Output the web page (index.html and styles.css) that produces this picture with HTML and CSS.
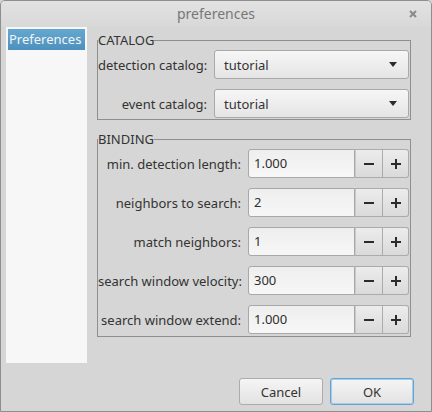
FILE: index.html
```html
<!DOCTYPE html>
<html>
<head>
<meta charset="utf-8">
<link rel="stylesheet" href="styles.css">
</head>
<body>
<div class="window">
  <div class="titlebar">
    <span class="title">preferences</span>
    <svg class="close" width="8" height="8" viewBox="0 0 8 8"><path d="M1 1 L7 7 M7 1 L1 7" stroke="#8a8a8a" stroke-width="2"/></svg>
  </div>
  <div class="content">
    <div class="sidebar">
      <div class="item selected">Preferences</div>
    </div>
    <div class="main">
      <fieldset class="group">
        <legend>CATALOG</legend>
        <div class="form catalog">
          <label>detection catalog:</label>
          <div class="combo"><span>tutorial</span><span class="arrow"></span></div>
          <label>event catalog:</label>
          <div class="combo"><span>tutorial</span><span class="arrow"></span></div>
        </div>
      </fieldset>
      <fieldset class="group binding">
        <legend>BINDING</legend>
        <div class="form bind">
          <label>min. detection length:</label>
          <div class="spin"><div class="field">1.000</div><div class="sbtn minus"><svg width="12" height="12" viewBox="0 0 12 12"><path d="M1 6H11" stroke="#2b2b2b" stroke-width="2"/></svg></div><div class="sbtn plus"><svg width="12" height="12" viewBox="0 0 12 12"><path d="M1 6H11M6 1V11" stroke="#2b2b2b" stroke-width="2"/></svg></div></div>
          <label>neighbors to search:</label>
          <div class="spin"><div class="field">2</div><div class="sbtn minus"><svg width="12" height="12" viewBox="0 0 12 12"><path d="M1 6H11" stroke="#2b2b2b" stroke-width="2"/></svg></div><div class="sbtn plus"><svg width="12" height="12" viewBox="0 0 12 12"><path d="M1 6H11M6 1V11" stroke="#2b2b2b" stroke-width="2"/></svg></div></div>
          <label>match neighbors:</label>
          <div class="spin"><div class="field">1</div><div class="sbtn minus"><svg width="12" height="12" viewBox="0 0 12 12"><path d="M1 6H11" stroke="#2b2b2b" stroke-width="2"/></svg></div><div class="sbtn plus"><svg width="12" height="12" viewBox="0 0 12 12"><path d="M1 6H11M6 1V11" stroke="#2b2b2b" stroke-width="2"/></svg></div></div>
          <label>search window velocity:</label>
          <div class="spin"><div class="field">300</div><div class="sbtn minus"><svg width="12" height="12" viewBox="0 0 12 12"><path d="M1 6H11" stroke="#2b2b2b" stroke-width="2"/></svg></div><div class="sbtn plus"><svg width="12" height="12" viewBox="0 0 12 12"><path d="M1 6H11M6 1V11" stroke="#2b2b2b" stroke-width="2"/></svg></div></div>
          <label>search window extend:</label>
          <div class="spin"><div class="field">1.000</div><div class="sbtn minus"><svg width="12" height="12" viewBox="0 0 12 12"><path d="M1 6H11" stroke="#2b2b2b" stroke-width="2"/></svg></div><div class="sbtn plus"><svg width="12" height="12" viewBox="0 0 12 12"><path d="M1 6H11M6 1V11" stroke="#2b2b2b" stroke-width="2"/></svg></div></div>
        </div>
      </fieldset>
    </div>
  </div>
  <div class="buttons">
    <button class="btn">Cancel</button>
    <button class="btn ok">OK</button>
  </div>
</div>
</body>
</html>
```
FILE: styles.css
```css
* { box-sizing: border-box; }
html, body { margin: 0; padding: 0; background: #d6d6d6; }
body {
  font-family: "Noto Sans", "DejaVu Sans", sans-serif;
  font-size: 13px;
  color: #333333;
}
.window {
  width: 432px;
  height: 412px;
  border: 1px solid #8e8e8e;
  border-radius: 5px 5px 0 0;
  background: #d6d6d6;
  overflow: hidden;
}
.titlebar {
  height: 26px;
  display: flex;
  align-items: center;
  justify-content: center;
  position: relative;
  background: linear-gradient(#e2e2e2, #d8d8d8);
}
.title {
  font-size: 14px;
  color: #777777;
  line-height: 16px;
}
.close {
  position: absolute;
  right: 14px;
  top: 9px;
}
.content {
  height: 336px;
  display: flex;
  padding-left: 5px;
  gap: 10px;
}
.sidebar {
  width: 81px;
  height: 336px;
  background: #f7f7f7;
  padding: 2px;
}
.item {
  height: 21px;
  line-height: 21px;
  padding-left: 1px;
  white-space: nowrap;
  overflow: hidden;
}
.item.selected {
  background: linear-gradient(#64a8d0, #4e90bd);
  color: #f4f4f4;
}
.main {
  width: 314px;
  padding-top: 6px;
}
.group {
  margin: 0;
  padding: 2px 1px 1px 0;
  border: 1px solid #8f8f8f;
  min-width: 0;
}
.group legend {
  padding: 0;
  line-height: 15px;
  font-size: 13px;
  color: #333333;
}
.group.binding {
  margin-top: 12px;
  padding-bottom: 2px;
}
.form {
  display: grid;
  column-gap: 7px;
  row-gap: 10px;
  align-items: center;
}
.form.catalog { grid-template-columns: 109px 1fr; }
.form.bind { grid-template-columns: 143px 1fr; }
.form label {
  text-align: right;
  white-space: nowrap;
}
.combo {
  height: 29px;
  border: 1px solid #a9a9a9;
  border-radius: 3px;
  background: linear-gradient(#f6f6f6, #e5e5e5);
  display: flex;
  align-items: center;
  justify-content: space-between;
  padding: 0 11px 0 9px;
}
.arrow {
  width: 0;
  height: 0;
  border-left: 4.5px solid transparent;
  border-right: 4.5px solid transparent;
  border-top: 5px solid #2c2c2c;
}
.spin {
  height: 29px;
  display: flex;
}
.field {
  width: 107px;
  border: 1px solid #a8a8a8;
  border-radius: 3px 0 0 3px;
  background: linear-gradient(#eeeeee, #f7f7f7);
  padding-left: 5px;
  line-height: 27px;
  color: #2e2e2e;
}
.sbtn {
  display: flex;
  align-items: center;
  justify-content: center;
  border: 1px solid #ababab;
  border-left: none;
  background: linear-gradient(#ececec, #dadada);
}
.sbtn.minus { width: 28px; box-shadow: inset 1px 0 0 #c8c8c8; }
.sbtn.plus { width: 26px; border-radius: 0 3px 3px 0; }
.buttons {
  display: flex;
  justify-content: flex-end;
  gap: 7px;
  padding: 15px 17px 0 0;
}
.btn {
  width: 84px;
  height: 27px;
  border: 1px solid #acacac;
  border-radius: 3px;
  background: linear-gradient(#f5f5f5, #e2e2e2);
  font-family: "Noto Sans", "DejaVu Sans", sans-serif;
  font-size: 13px;
  color: #333333;
  padding: 0;
}
.btn.ok {
  border-color: #62a4d4;
  box-shadow: inset 0 0 0 1px #a8cbe6;
}
```
